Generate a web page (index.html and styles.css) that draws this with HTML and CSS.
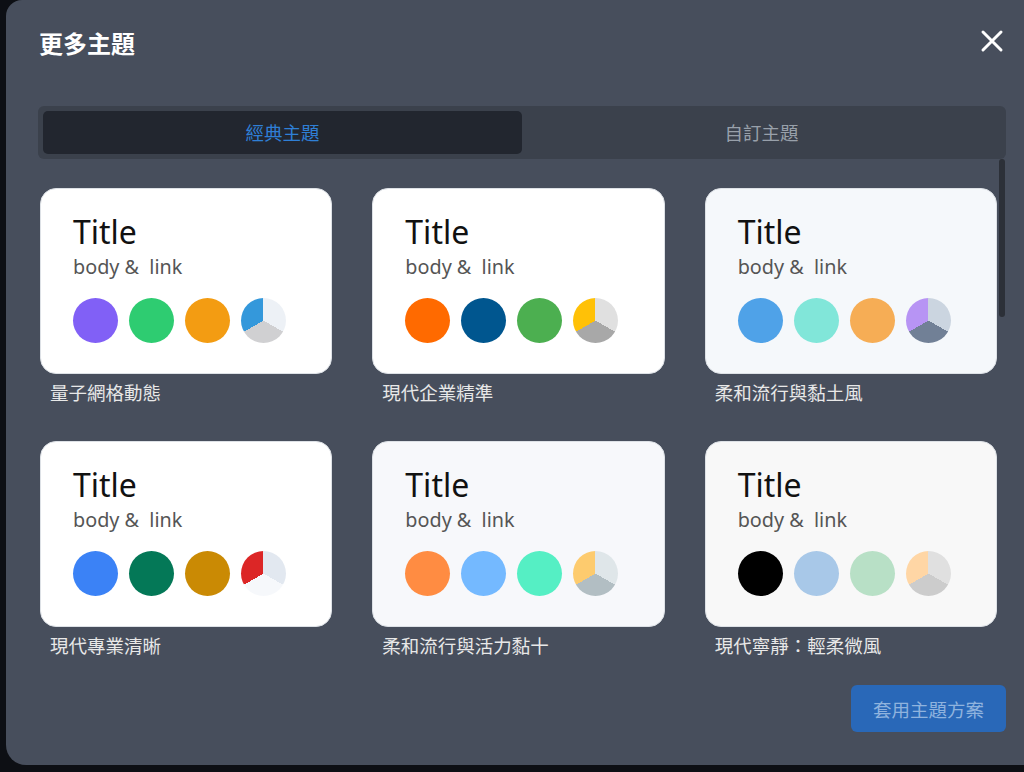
FILE: index.html
```html
<!DOCTYPE html>
<html lang="zh-Hant">
<head>
    <meta charset="UTF-8">
    <meta name="viewport" content="width=device-width, initial-scale=1.0">
    <title>更多主題</title>
    <link rel="stylesheet" href="styles.css">
</head>
<body>

    <div class="modal">
        <div class="modal-header">
            <h2>更多主題</h2>
            <button class="close-btn" aria-label="close">
                <svg width="24" height="24" viewBox="0 0 24 24">
                    <path d="M3 3 L21 21 M21 3 L3 21" stroke="#fff" stroke-width="3" stroke-linecap="round" fill="none"/>
                </svg>
            </button>
        </div>

        <div class="tabs">
            <div class="tab active">經典主題</div>
            <div class="tab">自訂主題</div>
        </div>

        <div class="theme-list">
            <div class="scroll-thumb"></div>

            <div class="theme-grid">
                <div class="theme quantum">
                    <div class="card">
                        <div class="card-title">Title</div>
                        <div class="card-body">body &amp;  link</div>
                        <div class="swatches">
                            <span class="dot"></span><span class="dot"></span><span class="dot"></span><span class="dot pie"></span>
                        </div>
                    </div>
                    <div class="theme-name">量子網格動態</div>
                </div>

                <div class="theme corporate">
                    <div class="card">
                        <div class="card-title">Title</div>
                        <div class="card-body">body &amp;  link</div>
                        <div class="swatches">
                            <span class="dot"></span><span class="dot"></span><span class="dot"></span><span class="dot pie"></span>
                        </div>
                    </div>
                    <div class="theme-name">現代企業精準</div>
                </div>

                <div class="theme clay">
                    <div class="card">
                        <div class="card-title">Title</div>
                        <div class="card-body">body &amp;  link</div>
                        <div class="swatches">
                            <span class="dot"></span><span class="dot"></span><span class="dot"></span><span class="dot pie"></span>
                        </div>
                    </div>
                    <div class="theme-name">柔和流行與黏土風</div>
                </div>

                <div class="theme clear">
                    <div class="card">
                        <div class="card-title">Title</div>
                        <div class="card-body">body &amp;  link</div>
                        <div class="swatches">
                            <span class="dot"></span><span class="dot"></span><span class="dot"></span><span class="dot pie"></span>
                        </div>
                    </div>
                    <div class="theme-name">現代專業清晰</div>
                </div>

                <div class="theme vivid">
                    <div class="card">
                        <div class="card-title">Title</div>
                        <div class="card-body">body &amp;  link</div>
                        <div class="swatches">
                            <span class="dot"></span><span class="dot"></span><span class="dot"></span><span class="dot pie"></span>
                        </div>
                    </div>
                    <div class="theme-name">柔和流行與活力黏十</div>
                </div>

                <div class="theme breeze">
                    <div class="card">
                        <div class="card-title">Title</div>
                        <div class="card-body">body &amp;  link</div>
                        <div class="swatches">
                            <span class="dot"></span><span class="dot"></span><span class="dot"></span><span class="dot pie"></span>
                        </div>
                    </div>
                    <div class="theme-name">現代寧靜：輕柔微風</div>
                </div>
            </div>
        </div>

        <div class="modal-footer">
            <button class="apply-btn">套用主題方案</button>
        </div>
    </div>

</body>
</html>
```

FILE: styles.css
```css
/* Page behind the dialog */
body {
    margin: 0;
    height: 772px;
    overflow: hidden;
    background: #0d0f14;
    font-family: "Noto Sans", "Noto Sans CJK TC", sans-serif;
}

.modal {
    margin-left: 6px;
    width: 1040px;
    height: 765px;
    box-sizing: border-box;
    padding: 0 40px 0 32px;
    background: #474e5c;
    border-radius: 16px 0 0 20px;
    display: flex;
    flex-direction: column;
}

.modal-header {
    display: flex;
    justify-content: space-between;
    align-items: center;
    padding-top: 28px;
    height: 30px;
}
.modal-header h2 {
    margin: 0 0 0 1px;
    font-size: 24px;
    line-height: 30px;
    font-weight: 700;
    color: #fff;
    font-family: "Noto Sans CJK TC", sans-serif;
}
.close-btn {
    background: none;
    border: none;
    padding: 0;
    margin-right: 2px;
    margin-top: -4px;
    cursor: pointer;
    display: flex;
}

.tabs {
    margin-top: 48px;
    padding: 5px;
    background: #3b414c;
    border-radius: 6px;
    display: flex;
}
.tab {
    flex: 1;
    height: 43px;
    line-height: 43px;
    text-align: center;
    font-size: 18.5px;
    color: #98a0aa;
    border-radius: 5px;
    font-family: "Noto Sans CJK TC", sans-serif;
}
.tab.active { background: #22262f; color: #2f7fd6; }

.theme-list {
    position: relative;
    padding: 29px 9px 0 2px;
}
.scroll-thumb {
    position: absolute;
    top: 0;
    right: 1px;
    width: 6px;
    height: 158px;
    background: #2c3038;
    border-radius: 3px;
}

.theme-grid {
    display: grid;
    grid-template-columns: repeat(3, 1fr);
    column-gap: 40px;
    row-gap: 38px;
}

.card {
    padding: 23px 32px 31px;
    background: #fff;
    border: 1px solid #dde1e6;
    border-radius: 16px;
    box-sizing: border-box;
    height: 186px;
}
.card-title {
    font-size: 32px;
    line-height: 40px;
    color: #111;
}
.card-body {
    margin-top: 2px;
    font-size: 19.8px;
    line-height: 26px;
    color: #555;
    white-space: pre;
}
.swatches {
    margin-top: 18px;
    display: flex;
    gap: 11px;
}
.dot {
    width: 45px;
    height: 45px;
    border-radius: 50%;
}

.theme-name {
    margin-top: 8px;
    padding-left: 10px;
    font-size: 18.5px;
    line-height: 21px;
    color: #e8e8e8;
    font-family: "Noto Sans CJK TC", sans-serif;
}

/* theme colours */
.quantum .dot:nth-child(1) { background: #8160f6; }
.quantum .dot:nth-child(2) { background: #2ecc71; }
.quantum .dot:nth-child(3) { background: #f39c12; }
.quantum .pie { background: conic-gradient(#edf1f6 0 120deg, #d0d0d2 120deg 240deg, #3498db 240deg 360deg); }

.corporate .dot:nth-child(1) { background: #ff6a00; }
.corporate .dot:nth-child(2) { background: #00568f; }
.corporate .dot:nth-child(3) { background: #4caf50; }
.corporate .pie { background: conic-gradient(#e0e0e0 0 120deg, #a8a8a8 120deg 240deg, #ffc107 240deg 360deg); }

.clay .card { background: #f5f8fb; }
.clay .dot:nth-child(1) { background: #4fa2e8; }
.clay .dot:nth-child(2) { background: #81e6d9; }
.clay .dot:nth-child(3) { background: #f6ad55; }
.clay .pie { background: conic-gradient(#cbd5e0 0 120deg, #718096 120deg 240deg, #b794f4 240deg 360deg); }

.clear .dot:nth-child(1) { background: #3b82f6; }
.clear .dot:nth-child(2) { background: #047857; }
.clear .dot:nth-child(3) { background: #ca8a04; }
.clear .pie { background: conic-gradient(#e2e8f0 0 120deg, #f6f8fb 120deg 240deg, #dc2626 240deg 360deg); }

.vivid .card { background: #f7f8fb; }
.vivid .dot:nth-child(1) { background: #ff8c42; }
.vivid .dot:nth-child(2) { background: #74b9ff; }
.vivid .dot:nth-child(3) { background: #55efc4; }
.vivid .pie { background: conic-gradient(#dfe6e9 0 120deg, #b2bec3 120deg 240deg, #fdcb6e 240deg 360deg); }

.breeze .card { background: #f8f8f8; }
.breeze .dot:nth-child(1) { background: #000; }
.breeze .dot:nth-child(2) { background: #a8c8e8; }
.breeze .dot:nth-child(3) { background: #b8e0c6; }
.breeze .pie { background: conic-gradient(#e0e0e0 0 120deg, #cccccc 120deg 240deg, #ffd6a5 240deg 360deg); }

.modal-footer {
    margin-top: auto;
    padding-bottom: 33px;
    display: flex;
    justify-content: flex-end;
}
.apply-btn {
    height: 47px;
    padding: 0 22px;
    font-size: 18.5px;
    background: #2968b8;
    color: #8fb3de;
    border: none;
    border-radius: 6px;
    cursor: pointer;
    font-family: "Noto Sans CJK TC", sans-serif;
}
```
